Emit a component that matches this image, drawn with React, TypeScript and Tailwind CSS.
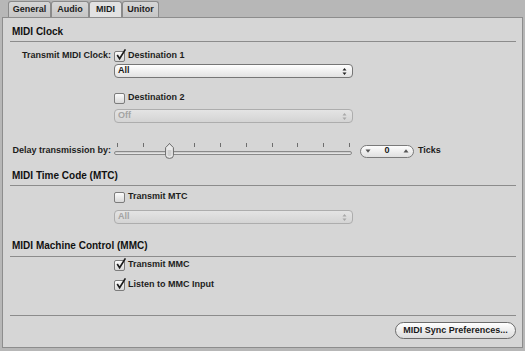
import React from 'react'

function CheckBox({ checked }: { checked?: boolean }) {
  return (
    <span className="relative inline-block h-[11px] w-[11px] shrink-0 rounded-[2px] border border-[#7c7c7c] bg-linear-to-b from-[#fbfbfb] to-[#d9d9d9]">
      {checked && (
        <svg
          className="absolute left-[1px] top-[-3px] overflow-visible"
          width="10"
          height="11"
          viewBox="0 0 10 11">
          <path d="M1.2 6 L3.6 9.6 L9.4 0.4" fill="none" stroke="#1c1c1c" strokeWidth="1.7" />
        </svg>
      )}
    </span>
  )
}

function PopUp({ value, disabled }: { value: string; disabled?: boolean }) {
  return (
    <div
      className={
        disabled
          ? 'flex h-[14px] w-[239px] items-center justify-between rounded-[4px] border border-[#adadad] bg-linear-to-b from-[#e4e4e4] to-[#d4d4d4] pl-[3px] pr-[5px] text-[#a3a3a3]'
          : 'flex h-[14px] w-[239px] items-center justify-between rounded-[4px] border border-[#767676] bg-linear-to-b from-[#ffffff] to-[#e2e2e2] pl-[3px] pr-[5px] text-[#1a1a1a]'
      }>
      <span>{value}</span>
      <svg width="5" height="9" viewBox="0 0 5 9">
        <path d="M0.5 3.5 L2.5 1 L4.5 3.5 Z M0.5 5.5 L2.5 8 L4.5 5.5 Z" fill={disabled ? '#a8a8a8' : '#222'} />
      </svg>
    </div>
  )
}

function Row({ label, children }: { label?: string; children: React.ReactNode }) {
  return (
    <div className="flex h-[14px] items-center">
      <div className="w-[101px] text-right">{label}</div>
      <div className="ml-[3px] flex items-center gap-[3px]">{children}</div>
    </div>
  )
}

function Heading({ title, className }: { title: string; className: string }) {
  return (
    <div className={`border-b border-[#8c8c8c] pl-[2px] text-[10px] leading-[13px] text-[#111] ${className}`}>
      {title}
    </div>
  )
}

const tabs = [
  { name: 'General', w: 'w-[43px]' },
  { name: 'Audio', w: 'w-[38px]' },
  { name: 'MIDI', w: 'w-[33px]', active: true },
  { name: 'Unitor', w: 'w-[37px]' },
]

export default function App() {
  return (
    <div className="flex h-[351px] w-[525px] flex-col bg-[#b7b7b7] font-['Liberation_Sans',Arial,sans-serif] text-[9px] font-bold text-[#1d1d1d]">
      <div className="flex h-[17px] items-end pl-[8px]">
        {tabs.map((t) => (
          <div
            key={t.name}
            className={`${t.w} flex h-[16px] items-center justify-center rounded-t-[3px] border border-b-0 border-[#8a8a8a] ${
              t.active ? 'bg-[#e2e2e2]' : 'bg-linear-to-b from-[#d6d6d6] to-[#c6c6c6]'
            }`}>
            {t.name}
          </div>
        ))}
      </div>

      <div className="ml-[2px] mr-[2px] flex h-[331px] flex-col border border-[#8d8d8d] bg-[#d6d6d6] pl-[7px] pr-[6px]">
        <Heading title="MIDI Clock" className="h-[24px] pt-[7px]" />

        <div className="mt-[7px]">
          <Row label="Transmit MIDI Clock:">
            <CheckBox checked />
            <span>Destination 1</span>
          </Row>
        </div>
        <div className="ml-[104px] mt-[1px]">
          <PopUp value="All" />
        </div>

        <div className="mt-[13px]">
          <Row>
            <CheckBox />
            <span>Destination 2</span>
          </Row>
        </div>
        <div className="ml-[104px] mt-[4px]">
          <PopUp value="Off" disabled />
        </div>

        <div className="mt-[20px] flex h-[16px] items-center">
          <div className="w-[101px] text-right">Delay transmission by:</div>
          <div className="relative ml-[3px] h-[16px] w-[238px]">
            <div className="flex h-[4px] justify-between pl-[3px] pr-[2px]">
              {Array.from({ length: 10 }).map((_, i) => (
                <span key={i} className="h-[4px] w-px bg-[#6e6e6e]" />
              ))}
            </div>
            <div className="mt-[4px] h-[4px] rounded-full border border-[#8a8a8a] bg-linear-to-b from-[#c4c4c4] to-[#eeeeee]" />
            <svg className="absolute left-[51px] top-0" width="9" height="16" viewBox="0 0 9 16">
              <path
                d="M4.5 0.6 L8.4 4.6 L8.4 12.5 Q8.4 15.4 4.5 15.4 Q0.6 15.4 0.6 12.5 L0.6 4.6 Z"
                fill="#e9e9e9"
                stroke="#6a6a6a"
                strokeWidth="1"
              />
              <path d="M2.5 7 L2.5 12.5 Q4.5 14 6.5 12.5 L6.5 7" fill="#cfcfcf" />
            </svg>
          </div>
          <div className="ml-[8px] flex h-[13px] w-[54px] items-center justify-between rounded-full border border-[#7a7a7a] bg-linear-to-b from-[#fdfdfd] to-[#e0e0e0] px-[4px]">
            <svg width="6" height="4" viewBox="0 0 6 4">
              <path d="M0.5 0.5 L5.5 0.5 L3 3.8 Z" fill="#555" />
            </svg>
            <span className="text-[#1a1a1a]">0</span>
            <svg width="6" height="4" viewBox="0 0 6 4">
              <path d="M0.5 3.5 L5.5 3.5 L3 0.2 Z" fill="#555" />
            </svg>
          </div>
          <span className="ml-[4px]">Ticks</span>
        </div>

        <Heading title="MIDI Time Code (MTC)" className="h-[27px] pt-[10px]" />

        <div className="mt-[4px]">
          <Row>
            <CheckBox />
            <span>Transmit MTC</span>
          </Row>
        </div>
        <div className="ml-[104px] mt-[6px]">
          <PopUp value="All" disabled />
        </div>

        <Heading title="MIDI Machine Control (MMC)" className="h-[33px] pt-[15px]" />

        <div className="mt-[1px]">
          <Row>
            <CheckBox checked />
            <span>Transmit MMC</span>
          </Row>
        </div>
        <div className="mt-[6px]">
          <Row>
            <CheckBox checked />
            <span>Listen to MMC Input</span>
          </Row>
        </div>

        <div className="mt-[23px] h-px bg-[#8c8c8c]" />

        <div className="mt-[6px] flex justify-end">
          <button className="flex h-[17px] w-[121px] items-center justify-center rounded-full border border-[#6c6c6c] bg-linear-to-b from-[#ffffff] to-[#dcdcdc] text-[9px] font-bold text-[#1a1a1a]">
            MIDI Sync Preferences...
          </button>
        </div>
      </div>
    </div>
  )
}
